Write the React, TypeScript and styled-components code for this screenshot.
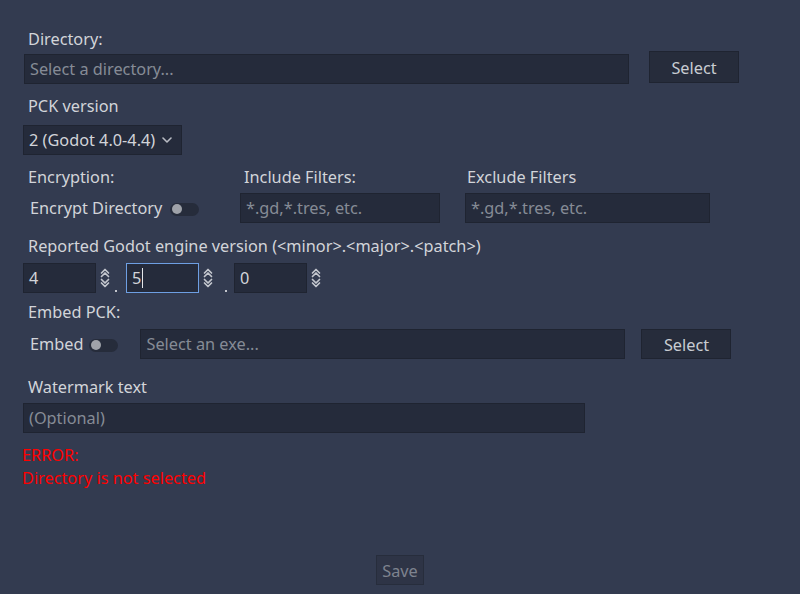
import React from "react";
import styled, { createGlobalStyle } from "styled-components";

const Global = createGlobalStyle`
  html, body { margin: 0; padding: 0; background: #333b50; }
  body { font-family: "Noto Sans", "Open Sans", sans-serif; -webkit-font-smoothing: antialiased; }
`;

const Page = styled.div`
  width: 800px;
  height: 594px;
  box-sizing: border-box;
  background: #333b50;
  padding-top: 28px;
  display: flex;
  flex-direction: column;
  color: #d2d4d9;
  font-size: 16.3px;
  overflow: hidden;
`;

const Label = styled.div<{ $mt?: number; $ml?: number }>`
  height: 22px;
  line-height: 22px;
  margin-top: ${(p) => p.$mt ?? 0}px;
  margin-left: ${(p) => p.$ml ?? 28}px;
  white-space: nowrap;
`;

const Row = styled.div<{ $mt: number; $pl: number }>`
  display: flex;
  align-items: flex-start;
  margin-top: ${(p) => p.$mt}px;
  padding-left: ${(p) => p.$pl}px;
`;

const Field = styled.div<{ $w: number; $mt?: number; $ml?: number; $focus?: boolean }>`
  box-sizing: border-box;
  width: ${(p) => p.$w}px;
  height: 30px;
  margin-top: ${(p) => p.$mt ?? 0}px;
  margin-left: ${(p) => p.$ml ?? 0}px;
  background: #252b3b;
  border: 1px solid ${(p) => (p.$focus ? "#6e9fe3" : "#1f2431")};
  padding: 0 5px;
  display: flex;
  align-items: center;
  color: #d2d4d9;
  white-space: nowrap;
  flex-shrink: 0;
`;

const Placeholder = styled.span`
  color: #868b96;
`;

const Caret = styled.span`
  display: inline-block;
  width: 1px;
  height: 20px;
  background: #e4e6ea;
  margin-left: 1px;
`;

const Button = styled.div<{ $w: number; $h: number; $ml?: number; $disabled?: boolean }>`
  box-sizing: border-box;
  width: ${(p) => p.$w}px;
  height: ${(p) => p.$h}px;
  margin-left: ${(p) => p.$ml ?? 0}px;
  padding-top: 1px;
  background: ${(p) => (p.$disabled ? "#2e3446" : "#262c3b")};
  border: 1px solid ${(p) => (p.$disabled ? "#272d3c" : "#1f2431")};
  color: ${(p) => (p.$disabled ? "#7e838f" : "#c9ccd2")};
  display: flex;
  align-items: center;
  justify-content: center;
  flex-shrink: 0;
`;

const Dropdown = styled.div`
  box-sizing: border-box;
  width: 159px;
  height: 30px;
  margin-top: 8px;
  margin-left: 23px;
  background: #252b3b;
  border: 1px solid #1f2431;
  display: flex;
  align-items: center;
  justify-content: space-between;
  padding: 0 9px 0 5px;
  color: #d2d4d9;
  white-space: nowrap;
`;

const Col = styled.div<{ $w: number; $ml?: number }>`
  display: flex;
  flex-direction: column;
  width: ${(p) => p.$w}px;
  margin-left: ${(p) => p.$ml ?? 0}px;
  flex-shrink: 0;
`;

const ColLabel = styled.div<{ $pl: number }>`
  height: 22px;
  line-height: 22px;
  padding-left: ${(p) => p.$pl}px;
  margin-bottom: 5px;
  white-space: nowrap;
`;

const ToggleLine = styled.div<{ $pl: number; $gap: number }>`
  display: flex;
  align-items: center;
  height: 30px;
  padding-left: ${(p) => p.$pl}px;
  gap: ${(p) => p.$gap}px;
  white-space: nowrap;
  flex-shrink: 0;
`;

const Track = styled.div`
  position: relative;
  width: 29px;
  height: 13px;
  margin-top: 2px;
  border-radius: 7px;
  background: #262c3b;
  flex-shrink: 0;
`;

const Knob = styled.div`
  position: absolute;
  left: 2px;
  top: 1.5px;
  width: 10px;
  height: 10px;
  border-radius: 50%;
  background: #9fa2a9;
`;

const Sep = styled.div<{ $w: number; $pl: number }>`
  width: ${(p) => p.$w}px;
  height: 30px;
  display: flex;
  align-items: flex-end;
  padding-left: ${(p) => p.$pl}px;
  box-sizing: border-box;
  flex-shrink: 0;
`;

const Dot = styled.div`
  width: 2px;
  height: 2px;
  margin-bottom: 1px;
  background: #c2c5cc;
`;

const Arrows = styled.svg`
  margin-left: 4px;
  margin-top: 4px;
  flex-shrink: 0;
`;

const ErrorText = styled.div<{ $mt?: number }>`
  margin-top: ${(p) => p.$mt ?? 0}px;
  margin-left: 22px;
  height: 23px;
  line-height: 23px;
  color: #ff0000;
`;

const Footer = styled.div`
  margin-top: 65px;
  display: flex;
  justify-content: center;
`;

const Toggle = () => (
  <Track>
    <Knob />
  </Track>
);

const UpDown = () => (
  <Arrows width="10" height="22" viewBox="0 0 10 22">
    <g fill="none" stroke="#c4c7ce" strokeWidth="1.7" strokeLinecap="round" strokeLinejoin="round">
      <path d="M1.5 6 L5 2.5 L8.5 6" />
      <path d="M1.5 9.5 L5 6 L8.5 9.5" />
      <path d="M1.5 12.5 L5 16 L8.5 12.5" />
      <path d="M1.5 16 L5 19.5 L8.5 16" />
    </g>
  </Arrows>
);

const Chevron = () => (
  <svg width="10" height="6" viewBox="0 0 10 6">
    <path d="M1 1 L5 5 L9 1" fill="none" stroke="#b9bcc3" strokeWidth="1.6" strokeLinecap="round" strokeLinejoin="round" />
  </svg>
);

export default function App() {
  return (
    <>
      <Global />
      <Page>
        <Label>Directory:</Label>
        <Row $mt={1} $pl={24}>
          <Field $w={605} $mt={3}>
            <Placeholder>Select a directory...</Placeholder>
          </Field>
          <Button $w={90} $h={32} $ml={20}>Select</Button>
        </Row>

        <Label $mt={11}>PCK version</Label>
        <Dropdown>
          <span>2 (Godot 4.0-4.4)</span>
          <Chevron />
        </Dropdown>

        <Row $mt={11} $pl={24}>
          <Col $w={216}>
            <ColLabel $pl={4}>Encryption:</ColLabel>
            <ToggleLine $pl={6} $gap={8}>
              <span>Encrypt Directory</span>
              <Toggle />
            </ToggleLine>
          </Col>
          <Col $w={200}>
            <ColLabel $pl={4}>Include Filters:</ColLabel>
            <Field $w={200}>
              <Placeholder>*.gd,*.tres, etc.</Placeholder>
            </Field>
          </Col>
          <Col $w={245} $ml={25}>
            <ColLabel $pl={2}>Exclude Filters</ColLabel>
            <Field $w={245}>
              <Placeholder>*.gd,*.tres, etc.</Placeholder>
            </Field>
          </Col>
        </Row>

        <Label $mt={12}>Reported Godot engine version (&lt;minor&gt;.&lt;major&gt;.&lt;patch&gt;)</Label>
        <Row $mt={6} $pl={23}>
          <Field $w={73}>4</Field>
          <UpDown />
          <Sep $w={16} $pl={5}>
            <Dot />
          </Sep>
          <Field $w={73} $focus>
            5<Caret />
          </Field>
          <UpDown />
          <Sep $w={21} $pl={12}>
            <Dot />
          </Sep>
          <Field $w={73}>0</Field>
          <UpDown />
        </Row>

        <Label $mt={8}>Embed PCK:</Label>
        <Row $mt={6} $pl={0}>
          <ToggleLine $pl={30} $gap={6}>
            <span>Embed</span>
            <Toggle />
          </ToggleLine>
          <Field $w={485} $ml={22}>
            <Placeholder>Select an exe...</Placeholder>
          </Field>
          <Button $w={90} $h={30} $ml={16}>Select</Button>
        </Row>

        <Label $mt={17}>Watermark text</Label>
        <Field $w={562} $mt={5} $ml={23}>
          <Placeholder>(Optional)</Placeholder>
        </Field>

        <ErrorText $mt={11}>ERROR:</ErrorText>
        <ErrorText>Directory is not selected</ErrorText>

        <Footer>
          <Button $w={48} $h={30} $disabled>Save</Button>
        </Footer>
      </Page>
    </>
  );
}
